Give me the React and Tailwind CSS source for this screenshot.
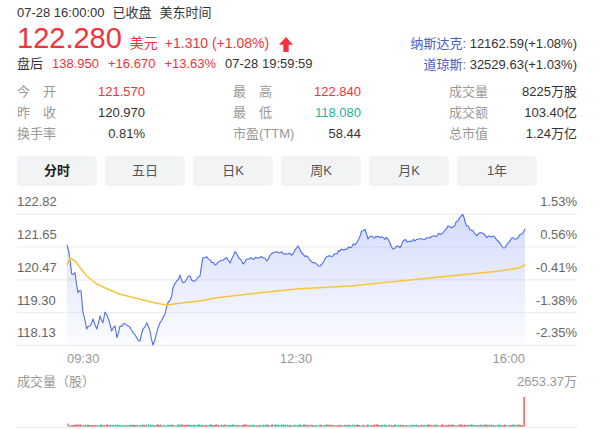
import React from "react";

function rng(seed) {
  let s = seed;
  return () => {
    s = (s * 16807) % 2147483647;
    return (s - 1) / 2147483646;
  };
}

function densify(pts, step, amp, rand) {
  const out = [];
  for (let i = 0; i < pts.length - 1; i++) {
    const [x0, y0] = pts[i];
    const [x1, y1] = pts[i + 1];
    const n = Math.max(1, Math.round((x1 - x0) / step));
    for (let k = 0; k < n; k++) {
      const t = k / n;
      const jitter = k === 0 ? 0 : (rand() - 0.5) * 2 * amp;
      out.push([x0 + (x1 - x0) * t, y0 + (y1 - y0) * t + jitter]);
    }
  }
  out.push(pts[pts.length - 1]);
  return out;
}

const toD = (pts) =>
  pts.map((p, i) => (i ? "L" : "M") + p[0].toFixed(1) + " " + p[1].toFixed(1)).join(" ");

const bluePts = [
  [67, 244], [69, 252], [71.7, 273], [75, 271.7], [78, 291.7], [81, 290], [83, 311.7], [86.7, 328], [90, 325], [93, 318], [96.7, 328], [100, 315], [103, 321.7], [105, 311], [108, 316.7], [111.7, 330], [115, 325], [117, 336.7], [120, 325], [123, 323], [128, 325], [133, 331.7], [136.7, 336.7], [140, 340], [143, 328], [146.7, 321.7], [150, 330], [153, 344], [156.7, 331.7], [160, 321.7], [165, 313], [168, 301.7], [171.7, 295], [173, 286.7], [176.7, 280], [180, 274], [183, 281.7], [186.7, 278], [190, 275], [193, 280], [196.7, 278], [200, 275], [203, 256.7], [206.7, 255.7], [211.7, 261.7], [216.7, 263], [220, 260], [226.7, 256.7], [230, 262], [235, 250.7], [240, 258], [243, 263], [248, 258], [256.7, 256.7], [263, 256.7], [266.7, 260], [273, 251.7], [280, 251.7], [286.7, 253], [293, 253], [298, 245], [303, 253], [306.7, 255], [313, 261.7], [320, 265], [323, 261.7], [326.7, 255.7], [333, 255], [340, 250], [350, 246.7], [356.7, 241.7], [361.7, 230], [365, 228.3], [368, 238], [371.7, 235], [380, 236.7], [388, 238], [393, 248], [396.7, 245], [400, 246.7], [403, 240], [410, 240], [416.7, 238.3], [423, 238.3], [426.7, 236.7], [433, 235], [443, 231.7], [448, 225], [451.7, 226.7], [458, 220], [462.7, 213.3], [466.7, 225], [473, 230], [476.7, 235], [481.7, 231.7], [486.7, 236.7], [493, 235], [498, 240], [501.7, 245], [505, 246.7], [510, 240], [513, 236.7], [518, 236.7], [521.7, 233.3], [525, 227.7],
];

const yellowPts = [
  [67, 264], [70, 256.7], [75, 260], [86.7, 275], [96.7, 283], [106.7, 287.7], [120, 293.3], [140, 298.3], [156.7, 302.3], [166.7, 304], [183, 301.7], [200, 300], [216.7, 296.7], [266.7, 291], [300, 287.7], [350, 285], [400, 280], [450, 275], [500, 270], [520, 266.7], [523, 265], [525, 263.3],
];

const r1 = rng(12345);
const blueDense = densify(bluePts, 1.5, 1.5, r1);
const blueD = toD(blueDense);
const fillD = blueD + " L525 345 L67 345 Z";
const yellowD = toD(yellowPts);

const r2 = rng(777);
const volBars = [];
for (let x = 69; x < 523; x += 1) {
  volBars.push({ x, red: r2() > 0.5, h: 1 + r2() * 1.2 });
}

const gridYs = [213.3, 246, 278.8, 311.5, 344.3];
const leftLabels = ["122.82", "121.65", "120.47", "119.30", "118.13"];
const rightLabels = ["1.53%", "0.56%", "-0.41%", "-1.38%", "-2.35%"];

function Label2({ a, b }) {
  return (
    <span className="flex w-[39px] justify-between text-[#999]">
      <span>{a}</span>
      <span>{b}</span>
    </span>
  );
}

export default function App() {
  const font = { fontFamily: '"Liberation Sans", "Noto Sans CJK SC", Arial, sans-serif' };
  return (
    <div
      className="w-[612px] h-[429px] overflow-hidden bg-white pl-[17px] text-[13px] text-[#333]"
      style={font}
    >
      <div className="w-[560px]">
        {/* header */}
        <div className="flex justify-between">
          <div className="flex flex-col pt-[4px]">
            <div className="flex h-[18px] items-center gap-[8px] leading-[18px]">
              <span>07-28 16:00:00</span>
              <span>已收盘</span>
              <span>美东时间</span>
            </div>
            <div className="flex h-[33px] items-baseline leading-[33px] text-[#f5323c]">
              <span className="text-[29px]">122.280</span>
              <span className="ml-[8px] text-[14px]">美元</span>
              <span className="ml-[7px] text-[14px]">+1.310 (+1.08%)</span>
              <svg
                className="ml-[10px] mb-[3px] self-end"
                width="14"
                height="15"
                viewBox="0 0 14 15"
              >
                <path d="M7 0 L14 7.8 L9.7 7.8 L9.7 15 L4.3 15 L4.3 7.8 L0 7.8 Z" fill="#f5323c" />
              </svg>
            </div>
            <div className="flex h-[18px] items-center gap-[9px] leading-[18px]">
              <span>盘后</span>
              <span className="text-[#f5323c]">138.950</span>
              <span className="text-[#f5323c]">+16.670</span>
              <span className="text-[#f5323c]">+13.63%</span>
              <span>07-28 19:59:59</span>
            </div>
          </div>
          <div className="flex flex-col items-end gap-[3px] pt-[35px]">
            <div className="h-[18px] leading-[18px]">
              <span className="text-[#4d5ec4]">纳斯达克:</span> 12162.59(+1.08%)
            </div>
            <div className="h-[18px] leading-[18px]">
              <span className="text-[#4d5ec4]">道琼斯:</span> 32529.63(+1.03%)
            </div>
          </div>
        </div>

        {/* stats */}
        <div className="mt-[7px] grid grid-cols-3 gap-x-[88px] leading-[21px]">
          <div className="flex justify-between">
            <Label2 a="今" b="开" />
            <span className="text-[#f5323c]">121.570</span>
          </div>
          <div className="flex justify-between">
            <Label2 a="最" b="高" />
            <span className="text-[#f5323c]">122.840</span>
          </div>
          <div className="flex justify-between">
            <span className="text-[#999]">成交量</span>
            <span>8225万股</span>
          </div>
          <div className="flex justify-between">
            <Label2 a="昨" b="收" />
            <span>120.970</span>
          </div>
          <div className="flex justify-between">
            <Label2 a="最" b="低" />
            <span className="text-[#17b897]">118.080</span>
          </div>
          <div className="flex justify-between">
            <span className="text-[#999]">成交额</span>
            <span>103.40亿</span>
          </div>
          <div className="flex justify-between">
            <span className="text-[#999]">换手率</span>
            <span>0.81%</span>
          </div>
          <div className="flex justify-between">
            <span className="text-[#999]">市盈(TTM)</span>
            <span>58.44</span>
          </div>
          <div className="flex justify-between">
            <span className="text-[#999]">总市值</span>
            <span>1.24万亿</span>
          </div>
        </div>

        {/* tabs */}
        <div className="mt-[12px] flex gap-[8px]">
          {["分时", "五日", "日K", "周K", "月K", "1年"].map((t, i) => (
            <div
              key={t}
              className={
                i === 0
                  ? "flex h-[30px] w-[80px] items-center justify-center rounded-[4px] bg-[#f2f3f5] font-bold text-[#222]"
                  : "flex h-[30px] w-[80px] items-center justify-center rounded-[4px] bg-[#f2f3f5] text-[#555]"
              }
            >
              {t}
            </div>
          ))}
        </div>

        {/* chart */}
        <svg width="560" height="187" viewBox="17 185 560 187" className="block">
          <defs>
            <linearGradient id="fillg" x1="0" y1="213" x2="0" y2="345" gradientUnits="userSpaceOnUse">
              <stop offset="0" stopColor="#4e6ef2" stopOpacity="0.24" />
              <stop offset="1" stopColor="#4e6ef2" stopOpacity="0.02" />
            </linearGradient>
          </defs>
          {gridYs.map((y) => (
            <line key={y} x1="17" x2="577" y1={y} y2={y} stroke="#eeeeee" strokeWidth="1.2" />
          ))}
          {gridYs.map((y, i) => (
            <text key={"l" + i} x="17" y={y - 8} fontSize="13" fill="#666" style={font}>
              {leftLabels[i]}
            </text>
          ))}
          {gridYs.map((y, i) => (
            <text key={"r" + i} x="577" y={y - 8} fontSize="13" fill="#666" textAnchor="end" style={font}>
              {rightLabels[i]}
            </text>
          ))}
          <path d={fillD} fill="url(#fillg)" />
          <path d={blueD} fill="none" stroke="#4e6ef2" strokeWidth="1.1" strokeLinejoin="round" />
          <path d={yellowD} fill="none" stroke="#f8c53a" strokeWidth="1.5" strokeLinejoin="round" />
          <text x="67" y="361.6" fontSize="13" fill="#999" style={font}>09:30</text>
          <text x="296" y="361.6" fontSize="13" fill="#999" textAnchor="middle" style={font}>12:30</text>
          <text x="525" y="361.6" fontSize="13" fill="#999" textAnchor="end" style={font}>16:00</text>
        </svg>

        {/* volume header */}
        <div className="flex h-[18px] justify-between leading-[18px] text-[#999]">
          <span>成交量（股）</span>
          <span>2653.37万</span>
        </div>

        {/* volume chart */}
        <svg width="560" height="39" viewBox="17 390 560 39" className="block">
          <line x1="17" x2="577" y1="426.3" y2="426.3" stroke="#eeeeee" strokeWidth="1.2" />
          {volBars.map((b) => (
            <rect
              key={b.x}
              x={b.x}
              y={425.6 - b.h}
              width="1"
              height={b.h}
              fill={b.red ? "#f5323c" : "#17b897"}
              opacity="0.8"
            />
          ))}
          <rect x="67.5" y="422.5" width="1" height="3.1" fill="#f5323c" />
          <rect x="523.5" y="396" width="1.2" height="29.6" fill="#f5323c" />
        </svg>
      </div>
    </div>
  );
}
